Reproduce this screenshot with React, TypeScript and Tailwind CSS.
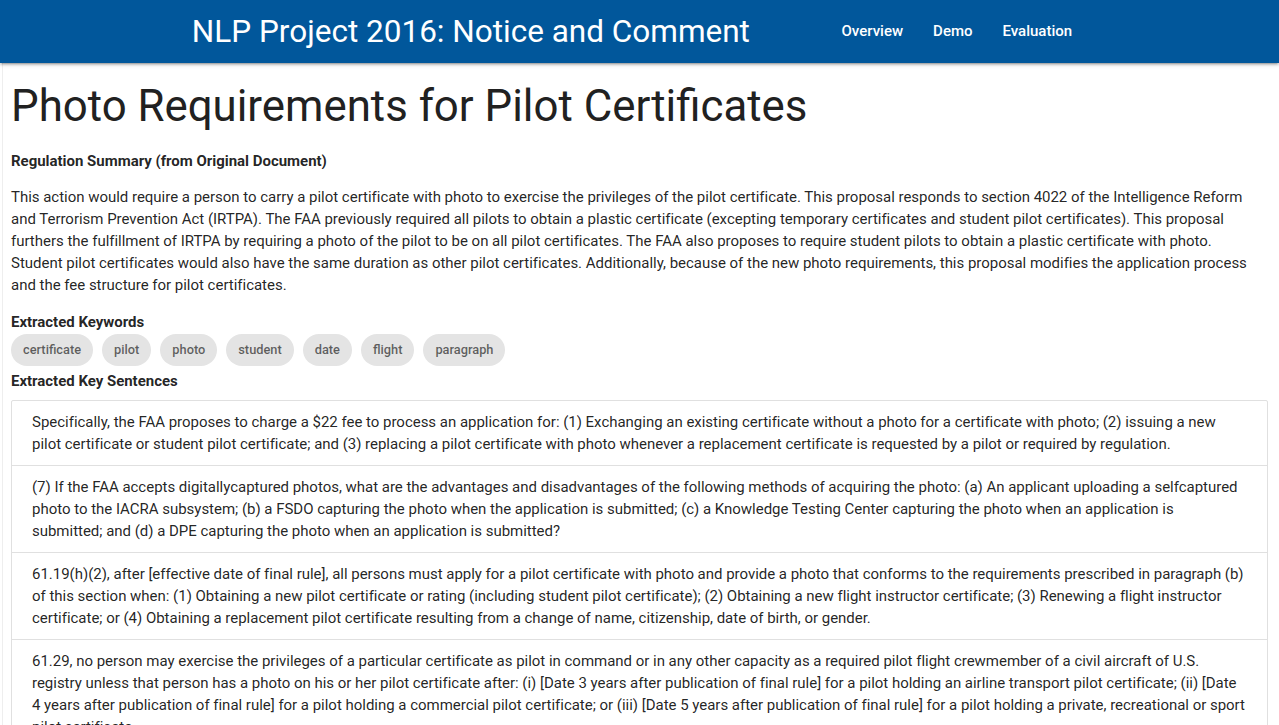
const keywords = ["certificate", "pilot", "photo", "student", "date", "flight", "paragraph"];

const sentences = [
  "Specifically, the FAA proposes to charge a $22 fee to process an application for: (1) Exchanging an existing certificate without a photo for a certificate with photo; (2) issuing a new pilot certificate or student pilot certificate; and (3) replacing a pilot certificate with photo whenever a replacement certificate is requested by a pilot or required by regulation.",
  "(7) If the FAA accepts digitallycaptured photos, what are the advantages and disadvantages of the following methods of acquiring the photo: (a) An applicant uploading a selfcaptured photo to the IACRA subsystem; (b) a FSDO capturing the photo when the application is submitted; (c) a Knowledge Testing Center capturing the photo when an application is submitted; and (d) a DPE capturing the photo when an application is submitted?",
  "61.19(h)(2), after [effective date of final rule], all persons must apply for a pilot certificate with photo and provide a photo that conforms to the requirements prescribed in paragraph (b) of this section when: (1) Obtaining a new pilot certificate or rating (including student pilot certificate); (2) Obtaining a new flight instructor certificate; (3) Renewing a flight instructor certificate; or (4) Obtaining a replacement pilot certificate resulting from a change of name, citizenship, date of birth, or gender.",
  "61.29, no person may exercise the privileges of a particular certificate as pilot in command or in any other capacity as a required pilot flight crewmember of a civil aircraft of U.S. registry unless that person has a photo on his or her pilot certificate after: (i) [Date 3 years after publication of final rule] for a pilot holding an airline transport pilot certificate; (ii) [Date 4 years after publication of final rule] for a pilot holding a commercial pilot certificate; or (iii) [Date 5 years after publication of final rule] for a pilot holding a private, recreational or sport pilot certificate.",
];

export default function App() {
  return (
    <div className="min-h-screen bg-white text-[15px] tracking-[-0.02px] leading-[22px] text-black/[0.87]" style={{ fontFamily: "Roboto, 'Liberation Sans', sans-serif" }}>
      {/* Header */}
      <nav className="h-[63px] bg-[#01579b] text-white tracking-normal shadow-[0_2px_2px_0_rgba(0,0,0,0.14),0_3px_1px_-2px_rgba(0,0,0,0.12),0_1px_5px_0_rgba(0,0,0,0.2)] relative z-10">
        <div className="w-[70%] mx-auto h-full flex items-center justify-between">
          <a className="text-[31.5px] leading-[63px] whitespace-nowrap">NLP Project 2016: Notice and Comment</a>
          <ul className="flex">
            <li><a className="px-[15px] font-medium text-[15px] leading-[63px]">Overview</a></li>
            <li><a className="px-[15px] font-medium text-[15px] leading-[63px]">Demo</a></li>
            <li><a className="px-[15px] font-medium text-[15px] leading-[63px]">Evaluation</a></li>
          </ul>
        </div>
      </nav>

      <div className="ml-[2px] border-l border-[#eeeeee] pl-[8px] pr-[11px] pb-6">
        <h1 className="text-[43.8px] tracking-normal leading-[48px] pt-[19px] pb-[20px] text-[#212121]">Photo Requirements for Pilot Certificates</h1>

        <h5 className="font-bold">Regulation Summary (from Original Document)</h5>
        <p className="mt-[14px] mb-[15px] mr-[5px]">
          This action would require a person to carry a pilot certificate with photo to exercise the privileges of the pilot certificate. This proposal responds to section 4022 of the Intelligence Reform and Terrorism Prevention Act (IRTPA). The FAA previously required all pilots to obtain a plastic certificate (excepting temporary certificates and student pilot certificates). This proposal furthers the fulfillment of IRTPA by requiring a photo of the pilot to be on all pilot certificates. The FAA also proposes to require student pilots to obtain a plastic certificate with photo. Student pilot certificates would also have the same duration as other pilot certificates. Additionally, because of the new photo requirements, this proposal modifies the application process and the fee structure for pilot certificates.
        </p>

        <h5 className="font-bold">Extracted Keywords</h5>
        <div className="flex flex-wrap gap-x-[9px] mt-[1px] mb-[4px]">
          {keywords.map((k) => (
            <span key={k} className="h-[32px] leading-[32px] px-[12px] rounded-[16px] bg-[#e4e4e4] text-[12.8px] tracking-normal font-medium text-black/60">
              {k}
            </span>
          ))}
        </div>

        <h5 className="font-bold">Extracted Key Sentences</h5>
        <ul className="mt-[8px] border border-[#e0e0e0] rounded-[2px]">
          {sentences.map((s, i) => (
            <li key={i} className="px-[20px] py-[10px] border-b border-[#e0e0e0] last:border-b-0">
              {s}
            </li>
          ))}
        </ul>
      </div>
    </div>
  );
}
